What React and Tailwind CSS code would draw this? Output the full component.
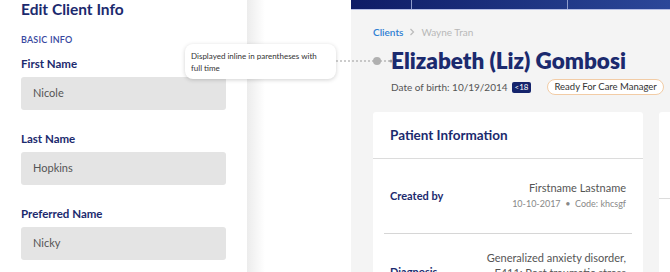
import React from 'react';

const font = { fontFamily: 'Lato, "Open Sans", sans-serif' };

const Field = ({ label, value, first }) => (
  <div className={first ? 'mt-[10px]' : 'mt-[21px]'}>
    <div className="h-[16px] leading-[16px] text-[11.5px] font-bold text-[#1b2a6e]">{label}</div>
    <div className="mt-[5px] h-[33px] w-[205px] rounded-[3px] bg-[#e4e4e4] flex items-center pl-[12px] text-[11px] text-[#555]">
      {value}
    </div>
  </div>
);

const EditPanel = () => (
  <div className="w-[247px] shrink-0 bg-white pl-[21px]">
    <div className="h-[18px] leading-[18px] text-[15.5px] font-bold text-[#1b2a6e]">Edit Client Info</div>
    <div className="mt-[16px] h-[12px] leading-[12px] text-[9px] font-semibold tracking-[0.2px] text-[#3848a0]">BASIC INFO</div>
    <Field first label="First Name" value="Nicole" />
    <Field label="Last Name" value="Hopkins" />
    <Field label="Preferred Name" value="Nicky" />
  </div>
);

const TopBar = () => (
  <div className="border-b border-[#b8c0e6]">
    <div className="flex h-[9px] bg-gradient-to-r from-[#0f1c66] to-[#2c4799]">
      <div className="w-[61px] border-r border-[#8f9ccc]" />
      <div className="w-[156px] border-r border-[#8f9ccc]" />
      <div className="flex-1" />
    </div>
  </div>
);

const PatientCard = () => (
  <div className="w-[270px] shrink-0 rounded-[3px] bg-white">
    <div className="flex h-[47px] items-center border-b border-[#dcdcdc] px-[17px] text-[13.5px] font-bold text-[#1b2a6e]">
      Patient Information
    </div>
    <div className="mx-[11px] flex h-[75px] items-center justify-between border-b border-[#d6d6d6] px-[6px]">
      <div className="text-[11px] font-bold text-[#1b2a6e]">Created by</div>
      <div className="text-right">
        <div className="text-[11px] leading-[16px] text-[#555]">Firstname Lastname</div>
        <div className="text-[9px] leading-[16px] text-[#888]">10-10-2017 &nbsp;•&nbsp; Code: khcsgf</div>
      </div>
    </div>
    <div className="mx-[11px] flex justify-between px-[6px] pt-[16px]">
      <div className="pt-[14px] text-[11px] font-bold text-[#1b2a6e]">Diagnosis</div>
      <div className="text-right text-[11px] leading-[15px] text-[#555]">
        <div>Generalized anxiety disorder,</div>
        <div>F411: Post traumatic stress</div>
      </div>
    </div>
  </div>
);

const Main = () => (
  <div className="flex-1 bg-[#f4f4f4] overflow-hidden">
    <TopBar />
    <div className="pl-[22px]">
      <div className="mt-[15px] flex h-[14px] items-center gap-[6px] text-[10px]">
        <span className="font-semibold text-[#2f7fd3]">Clients</span>
        <svg width="6" height="8" viewBox="0 0 6 8" className="text-[#bbb]">
          <path d="M1.5 1l3 3-3 3" fill="none" stroke="currentColor" strokeWidth="1.2" />
        </svg>
        <span className="text-[#b8b8b8]">Wayne Tran</span>
      </div>
      <div className="pl-[18px]">
        <div className="mt-[9px] h-[26px] leading-[26px] text-[22.5px] font-extrabold whitespace-nowrap text-[#1b2a6e]">
          Elizabeth (Liz) Gombosi
        </div>
        <div className="mt-[5px] flex h-[16px] items-center whitespace-nowrap">
          <span className="text-[10px] text-[#555]">Date of birth: 10/19/2014</span>
          <span className="ml-[4px] rounded-[2px] bg-[#15246c] px-[3px] text-[8px] leading-[11px] text-white">&lt;18</span>
          <span className="ml-[16px] rounded-full border border-[#f2cca6] bg-white px-[6px] text-[9.5px] leading-[14px] text-[#333]">
            Ready For Care Manager
          </span>
        </div>
      </div>
      <div className="mt-[17px] flex gap-[16px]">
        <PatientCard />
        <div className="w-[120px] shrink-0 rounded-[3px] bg-white">
          <div className="h-[87px] border-b border-[#dcdcdc]" />
        </div>
      </div>
    </div>
  </div>
);

export default function App() {
  return (
    <div className="relative flex h-[272px] w-[670px] overflow-hidden bg-white" style={font}>
      <EditPanel />
      <div className="w-[104px] shrink-0 bg-white">
        <div className="h-full w-[18px] bg-gradient-to-r from-[#ececec] to-white" />
      </div>
      <Main />

      {/* annotation tooltip */}
      <div className="absolute left-[185px] top-[44px] w-[151px] h-[35px] rounded-[8px] bg-white pl-[6px] pt-[6px] shadow-[0_1px_4px_rgba(0,0,0,0.18)]">
        <div className="text-[8px] leading-[12px] text-[#333]">
          Displayed inline in parentheses with
          <br />
          full time
        </div>
      </div>
      <svg className="absolute left-[336px] top-[56px]" width="58" height="10" viewBox="0 0 58 10">
        <line x1="0" y1="5" x2="54" y2="5" stroke="#9a9a9a" strokeWidth="1" strokeDasharray="2 2" />
        <circle cx="41" cy="5" r="4" fill="#b0b0b0" />
        <circle cx="55" cy="5" r="1.5" fill="#9a9a9a" />
      </svg>
    </div>
  );
}
